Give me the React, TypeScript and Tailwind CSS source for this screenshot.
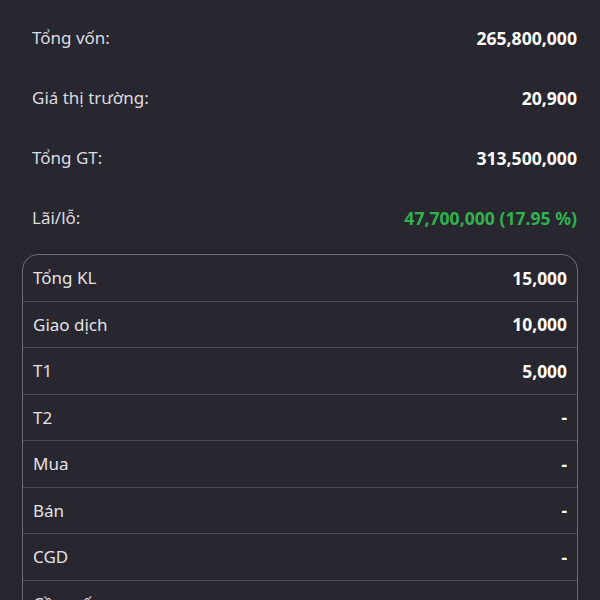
import React from "react";

const top = [
  { label: "Tổng vốn:", value: "265,800,000", green: false },
  { label: "Giá thị trường:", value: "20,900", green: false },
  { label: "Tổng GT:", value: "313,500,000", green: false },
  { label: "Lãi/lỗ:", value: "47,700,000 (17.95 %)", green: true },
];

const rows = [
  { label: "Tổng KL", value: "15,000" },
  { label: "Giao dịch", value: "10,000" },
  { label: "T1", value: "5,000" },
  { label: "T2", value: "-" },
  { label: "Mua", value: "-" },
  { label: "Bán", value: "-" },
  { label: "CGD", value: "-" },
  { label: "Cầm cố", value: "-" },
];

export default function App() {
  return (
    <div
      className="w-[600px] h-[600px] overflow-hidden bg-[#28262e] text-[#e6e6ea]"
      style={{ fontFamily: '"Noto Sans", "Open Sans", sans-serif' }}
    >
      <div className="pt-[8px] pl-[32px] pr-[23px]">
        {top.map((r) => (
          <div key={r.label} className="flex h-[60px] items-center justify-between text-[17px]">
            <span className="text-[#dcdce0]">{r.label}</span>
            <span className={"text-[17.6px] font-bold " + (r.green ? "text-[#2fb24f]" : "text-white")}>{r.value}</span>
          </div>
        ))}
      </div>
      <div className="mx-[22px] mt-[6px] rounded-t-[16px] border-[1.5px] border-[#6e6d74]">
        {rows.map((r) => (
          <div
            key={r.label}
            className="flex h-[46.5px] items-center justify-between border-b-[1.5px] border-[#4c4b52] pl-[10px] pr-[10px] text-[17px]"
          >
            <span className="text-[#e2e2e6]">{r.label}</span>
            <span className="text-[17.4px] font-bold text-white">{r.value}</span>
          </div>
        ))}
      </div>
    </div>
  );
}
